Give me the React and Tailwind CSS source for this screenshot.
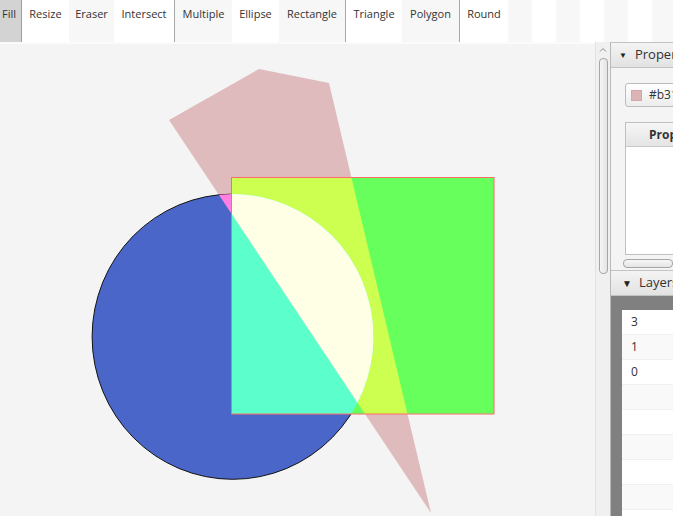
import React from 'react';

const tools = [
  { label: 'Fill', w: 'w-[22px]', bg: 'bg-[#d3d3d3] border-r border-[#9e9e9e] justify-start pl-[2px]' },
  { label: 'Resize', w: 'w-[47px]', bg: 'bg-white' },
  { label: 'Eraser', w: 'w-[45px]', bg: 'bg-[#f7f7f7]' },
  { label: 'Intersect', w: 'w-[60px]', bg: 'bg-white', sep: true },
  { label: 'Multiple', w: 'w-[57px]', bg: 'bg-[#f7f7f7]' },
  { label: 'Ellipse', w: 'w-[47px]', bg: 'bg-white' },
  { label: 'Rectangle', w: 'w-[66px]', bg: 'bg-[#f7f7f7]', sep: true },
  { label: 'Triangle', w: 'w-[56px]', bg: 'bg-white' },
  { label: 'Polygon', w: 'w-[57px]', bg: 'bg-[#f7f7f7]', sep: true },
  { label: 'Round', w: 'w-[48px]', bg: 'bg-white' },
];

const stripes = ['bg-[#f7f7f7]', 'bg-white', 'bg-[#f7f7f7]', 'bg-white', 'bg-[#f7f7f7]', 'bg-white', 'bg-[#f7f7f7]'];

const POLY = '259,69 329,83 431,513 169,120';

function Drawing() {
  return (
    <svg className="absolute left-0 top-0" width="595" height="472" viewBox="0 44 595 472">
      <defs>
        <clipPath id="cp-poly">
          <polygon points={POLY} />
        </clipPath>
        <clipPath id="cp-rect">
          <rect x="231.5" y="177.5" width="262.5" height="236.5" />
        </clipPath>
        <clipPath id="cp-circle">
          <ellipse cx="232.8" cy="336.7" rx="140.7" ry="142.6" />
        </clipPath>
      </defs>
      <polygon points={POLY} fill="#e0bbbd" />
      <ellipse cx="232.8" cy="336.7" rx="140.7" ry="142.6" fill="#4b66c9" stroke="#111" strokeWidth="1" />
      <polygon points={POLY} fill="#ff80e0" clipPath="url(#cp-circle)" />
      <rect x="231.5" y="177.5" width="262.5" height="236.5" fill="#66ff5c" />
      <polygon points={POLY} fill="#ccff4f" clipPath="url(#cp-rect)" />
      <ellipse cx="232.8" cy="336.7" rx="140.7" ry="142.6" fill="#5cffcc" clipPath="url(#cp-rect)" />
      <g clipPath="url(#cp-rect)">
        <polygon points={POLY} fill="#ffffe6" clipPath="url(#cp-circle)" />
      </g>
      <rect x="231.5" y="177.5" width="262.5" height="236.5" fill="none" stroke="#ff6b6b" strokeWidth="1" />
    </svg>
  );
}

function PaneHeader({ title, big }) {
  return (
    <div className="h-[26px] shrink-0 flex items-center border-t border-b border-[#c2c2c2] bg-gradient-to-b from-[#f4f4f4] to-[#e2e2e2] whitespace-nowrap">
      <span className={big ? 'ml-[11px] text-[10px] text-[#222] leading-none' : 'ml-[8px] text-[8px] text-[#222] leading-none'}>▼</span>
      <span className={big ? 'ml-[7px] text-[13px] text-[#333]' : 'ml-[8px] text-[13px] text-[#333]'}>{title}</span>
    </div>
  );
}

export default function App() {
  return (
    <div className="w-[673px] h-[516px] overflow-hidden flex flex-col bg-[#f4f4f4] font-['Open_Sans','Noto_Sans',sans-serif] text-[12px] text-[#333]">
      <div className="h-[42px] shrink-0 flex text-[11px]">
        {tools.map((t) => (
          <React.Fragment key={t.label}>
            <div className={`${t.w} ${t.bg} h-full flex justify-center items-start pt-[6px] leading-[16px] shrink-0`}>
              {t.label}
            </div>
            {t.sep && <div className="w-px h-full bg-[#a8a8a8] shrink-0" />}
          </React.Fragment>
        ))}
        {stripes.map((s, i) => (
          <div key={i} className={`w-[24px] h-full shrink-0 ${s}`} />
        ))}
      </div>
      <div className="flex-1 flex min-h-0">
        <div className="w-[595px] relative border-t-2 border-[#fbfbfb]">
          <Drawing />
        </div>
        <div className="w-[16px] shrink-0 bg-[#f0f0f0] border-l border-[#e2e2e2] border-r border-r-[#b8b8b8] flex flex-col items-center pt-[2px]">
          <svg width="8" height="6" viewBox="0 0 8 6" className="mt-[3px]">
            <path d="M1 4.5 L4 1.5 L7 4.5" fill="none" stroke="#8a8a8a" strokeWidth="1" />
          </svg>
          <div className="mt-[5px] w-[9px] h-[216px] rounded-[4px] border border-[#a6a6a6] bg-gradient-to-r from-[#f6f6f6] to-[#e4e4e4]" />
        </div>
        <div className="flex-1 min-w-0 overflow-hidden flex flex-col">
          <PaneHeader title="Properties" />
          <div className="h-[202px] shrink-0 flex flex-col bg-[#f4f4f4]">
            <div className="ml-[14px] mt-[15px] h-[24px] w-[110px] rounded-[3px] border border-[#bcbcbc] bg-gradient-to-b from-white to-[#ececec] flex items-center whitespace-nowrap">
              <div className="ml-[5px] w-[11px] h-[11px] bg-[#dcb4b6] border border-[#d0a8aa]" />
              <span className="ml-[7px] text-[12px] text-[#333]">#b31b1b</span>
            </div>
            <div className="ml-[14px] mt-[15px] w-[200px] flex-1 border border-[#c0c0c0] bg-white flex flex-col">
              <div className="h-[24px] border-b border-[#c8c8c8] bg-gradient-to-b from-[#f6f6f6] to-[#e4e4e4] flex items-center pl-[23px] font-bold text-[12px] text-[#333]">
                Property
              </div>
            </div>
            <div className="h-[13px] mt-[2px] flex items-center">
              <svg width="6" height="8" viewBox="0 0 6 8" className="ml-[3px]">
                <path d="M4.5 1 L1.5 4 L4.5 7" fill="none" stroke="#8a8a8a" strokeWidth="1" />
              </svg>
              <div className="ml-[8px] w-[200px] h-[9px] rounded-[4px] border border-[#a6a6a6] bg-gradient-to-b from-[#f6f6f6] to-[#e4e4e4]" />
            </div>
          </div>
          <PaneHeader title="Layers" big />
          <div className="flex-1 bg-[#808080] pl-[11px] pt-[14px]">
            <div className="bg-white h-full flex flex-col">
              {['3', '1', '0', '', '', '', '', '', ''].map((v, i) => (
                <div key={i} className={`h-[25px] shrink-0 flex items-center pl-[9px] border-b border-[#f0f0f0] ${i % 2 === 1 ? 'bg-[#f9f9f9]' : 'bg-white'}`}>
                  {v}
                </div>
              ))}
            </div>
          </div>
        </div>
      </div>
    </div>
  );
}
